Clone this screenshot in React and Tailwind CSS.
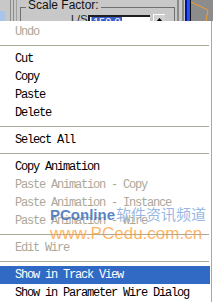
import React from "react";

const items = [
  { t: "Undo", d: true },
  { sep: true },
  { t: "Cut" },
  { t: "Copy" },
  { t: "Paste" },
  { t: "Delete" },
  { sep: true },
  { t: "Select All" },
  { sep: true },
  { t: "Copy Animation" },
  { t: "Paste Animation - Copy", d: true },
  { t: "Paste Animation - Instance", d: true },
  { t: "Paste Animation - Wire", d: true },
  { sep: true },
  { t: "Edit Wire", d: true },
  { sep: true },
  { t: "Show in Track View", h: true },
  { t: "Show in Parameter Wire Dialog" },
];

const sans = { fontFamily: '"Liberation Sans", Arial, sans-serif' };

function TopStrip() {
  return (
    <div className="flex h-[21px] w-[213px] overflow-hidden bg-[#c8c8c8]">
      <div className="mt-[11px] h-[10px] w-[5px] bg-[#a8c4e8]" />
      <div className="ml-[5px] w-px bg-[#8a8a8a]" />
      <div className="ml-[2px] w-px bg-[#8a8a8a]" />
      <div className="ml-[2px] w-px bg-[#a0a0a0]" />
      {/* group box */}
      <div className="relative ml-[3px] mt-[7px] h-[20px] w-[155px] shrink-0 border border-[#6f6f6f]">
        <div
          className="absolute left-[5px] top-[-10px] bg-[#c8c8c8] px-[2px] text-[12px] leading-[14px] text-[#111]"
          style={sans}
        >
          Scale Factor:
        </div>
        <div className="flex items-start pl-[50px] pt-[5px]">
          <div className="w-[17px] text-[11px] leading-[12px] text-[#222]" style={sans}>
            L/S:
          </div>
          <div className="flex h-[10px] w-[62px] mt-[2px] border-l-2 border-t-2 border-[#202020] bg-white">
            <div className="ml-px h-[8px] w-px bg-[#f0a040]" />
            <div className="bg-[#3a5fcd] px-px text-[11px] leading-[10px] text-white" style={sans}>
              150.0
            </div>
          </div>
          <div className="ml-[3px] mt-px flex h-[10px] w-[12px] justify-center border-l border-t border-white bg-[#d0d0d0] pt-[3px]">
            <svg width="7" height="4" viewBox="0 0 7 4">
              <path d="M3.5 0 L7 4 L0 4 Z" fill="#000" />
            </svg>
          </div>
        </div>
      </div>
      <div className="ml-[2px] w-[2px] bg-[#8a8a8a]" />
      <div className="ml-[3px] w-[2px] bg-[#8a8a8a]" />
      <div className="ml-px w-[2px] bg-[#0010a0]" />
      <div className="w-[3px] bg-[#2850f0]" />
      <div className="w-px bg-[#101010]" />
      <div className="w-[22px] bg-[#8c8c8c]">
        <svg width="22" height="21" viewBox="0 0 22 21">
          <polyline points="0,2 17,10 15,21" fill="none" stroke="#f0a030" strokeWidth="1" />
        </svg>
      </div>
    </div>
  );
}

export default function App() {
  return (
    <div className="relative h-[305px] w-[213px] overflow-hidden bg-white">
      <TopStrip />
      <div className="flex w-[213px]">
        <div
          className="flex w-[211px] flex-col bg-white pt-[2px] text-[12px] tracking-[-1.2px]"
          style={{ fontFamily: '"Liberation Mono", "Courier New", monospace' }}
        >
          {items.map((it, i) =>
            it.sep ? (
              <div key={i} className="flex h-[9px] items-center">
                <div className="h-px w-[209px] bg-[#aca899]" />
              </div>
            ) : (
              <div
                key={i}
                className={
                  "flex h-[18px] w-[210px] items-center whitespace-pre pl-[15px] " +
                  (it.h
                    ? "bg-[#316ac5] text-white"
                    : it.d
                    ? "text-[#aca899]"
                    : "text-black")
                }
              >
                {it.t}
              </div>
            )
          )}
        </div>
        <div className="w-px bg-[#aca899]" />
        <div className="w-px bg-white" />
      </div>
      {/* watermark overlay */}
      <div className="pointer-events-none absolute left-[50px] top-[206px] flex flex-col items-start whitespace-nowrap" style={sans}>
        <div className="flex items-baseline leading-[15px]">
          <span className="text-[15px] font-bold text-[#3c6fb8]/85">PConline</span>
          <span
            className="ml-px text-[15px] text-[#7aa5dc]/80"
            style={{ fontFamily: '"Noto Sans CJK SC", sans-serif' }}
          >
            软件资讯频道
          </span>
        </div>
        <div className="mt-[4px] text-[17px] leading-[16px] text-[#ff9a2e]/75">www.PCedu.com.cn</div>
      </div>
    </div>
  );
}
